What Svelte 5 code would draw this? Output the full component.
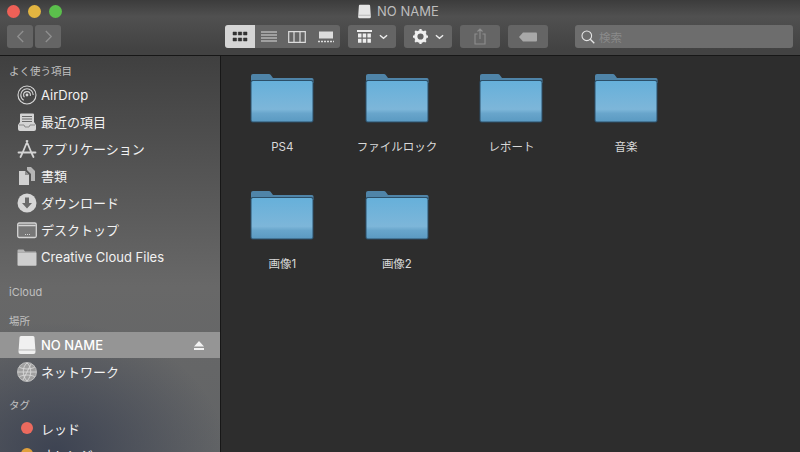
<script>
  const favs = [
    { k: 'airdrop', t: 'AirDrop' },
    { k: 'recent', t: '最近の項目' },
    { k: 'apps', t: 'アプリケーション' },
    { k: 'docs', t: '書類' },
    { k: 'down', t: 'ダウンロード' },
    { k: 'desk', t: 'デスクトップ' },
    { k: 'folder', t: 'Creative Cloud Files' }
  ];
  const files = ['PS4', 'ファイルロック', 'レポート', '音楽', '画像1', '画像2'];
</script>

{#snippet icon(k)}
  <svg class="ic" viewBox="0 0 20 20" width="20" height="20">
    {#if k === 'airdrop'}
      <g fill="none" stroke="#d8d8d8">
        <circle cx="10" cy="10" r="9" stroke-width="1.1" />
        <circle cx="10" cy="10" r="6.2" stroke-width="1.1" stroke-dasharray="26 13" stroke-dashoffset="-13" />
        <circle cx="10" cy="10" r="3.4" stroke-width="1.1" stroke-dasharray="15 7" stroke-dashoffset="-8" />
      </g>
      <circle cx="10" cy="10" r="1.4" fill="#d8d8d8" />
    {:else if k === 'recent'}
      <path d="M4 1.500h12a1 1 0 0 1 1 1V10l2 3v4a2 2 0 0 1-2 2H3a2 2 0 0 1-2-2v-4l2-3V2.500a1 1 0 0 1 1-1z" fill="#d4d4d4" />
      <path d="M5 4.500h10M5 7h10M5 9.500h10" stroke="#6a6a6a" stroke-width="1" />
      <path d="M2 13h5l1 2h4l1-2h5" fill="none" stroke="#8a8a8a" stroke-width="1" />
    {:else if k === 'apps'}
      <path d="M10.500 2 5 15M9.500 2 15 15M1.500 13.500h17M3.500 18l1.500-3M16.500 18 15 15" fill="none" stroke="#d4d4d4" stroke-width="1.800" stroke-linecap="round" />
    {:else if k === 'docs'}
      <path d="M2 5h6l4 4v10H2z" fill="#d0d0d0" />
      <path d="M10 1h4l4 4v10h-4V8l-4-4z" fill="#b5b5b5" />
      <path d="M8 5v4h4" fill="#8c8c8c" />
    {:else if k === 'down'}
      <circle cx="10" cy="10" r="9.500" fill="#d6d6d6" />
      <path d="M8 4.500h4V10h3l-5 5.500L5 10h3z" fill="#6a6a6a" />
    {:else if k === 'desk'}
      <rect x="0.700" y="3" width="18.600" height="14.500" rx="1.500" fill="#777" stroke="#d4d4d4" stroke-width="1.300" />
      <path d="M1.300 5.500h17.400" stroke="#d4d4d4" stroke-width="1.500" />
      <path d="M8 14.500h1M10 14.500h1M12 14.500h1" stroke="#d4d4d4" stroke-width="1.200" />
    {:else if k === 'folder'}
      <path d="M0.500 3.500a1 1 0 0 1 1-1h5l1.500 2h11v1H0.500z" fill="#b5b5b5" />
      <path d="M0.500 5.500h19V18a.8.8 0 0 1-.8.8H1.300a.8.8 0 0 1-.8-.8z" fill="#cecece" />
    {:else if k === 'drive'}
      <path d="M4 1h12a1.500 1.500 0 0 1 1.500 1.500L18.500 17a2 2 0 0 1-2 2h-13a2 2 0 0 1-2-2L2.500 2.500A1.500 1.500 0 0 1 4 1z" fill="#f0f0f0" />
      <path d="M1.800 15h16.400" stroke="#b5b5b5" stroke-width="1" />
    {:else if k === 'net'}
      <circle cx="10" cy="10" r="9.500" fill="#a0a0a0" stroke="#cfcfcf" stroke-width="0.800" />
      <g fill="none" stroke="#dedede" stroke-width="0.800">
        <path d="M10 1c-5 4-5 13 0 18M10 1c5 4 5 13 0 18M1 10h18M2.500 5.500c5 2 10 2 15 0M2.500 14.500c5-2 10-2 15 0M14 2 6 18" />
      </g>
    {/if}
  </svg>
{/snippet}

{#snippet folderArt()}
  <svg class="folder" viewBox="0 0 64 50" width="64" height="50">
    <defs>
      <linearGradient id="fbody" x1="0" y1="0" x2="0" y2="1">
        <stop offset="0" stop-color="#66b0da" />
        <stop offset="0.7" stop-color="#7db6d9" />
        <stop offset="0.8" stop-color="#68a5cb" />
        <stop offset="1" stop-color="#5b9ac2" />
      </linearGradient>
    </defs>
    <path d="M1 3a2 2 0 0 1 2-2h16a2 2 0 0 1 1.600.8L23 5h39a1.500 1.500 0 0 1 1.500 1.500V10H1z" fill="#4f84a8" />
    <rect x="0.500" y="7" width="63" height="42.500" rx="2" fill="#2c4f68" />
    <rect x="1.500" y="8" width="61" height="40.500" rx="1.500" fill="url(#fbody)" />
  </svg>
{/snippet}

<div class="win">
  <header class="top">
    <div class="titlerow">
      <div class="lights">
        <i class="red"></i><i class="yel"></i><i class="grn"></i>
      </div>
      <div class="title">
        <svg viewBox="0 0 20 20" width="15" height="15"><path d="M4 1h12a1.500 1.500 0 0 1 1.500 1.500L18.500 17a2 2 0 0 1-2 2h-13a2 2 0 0 1-2-2L2.500 2.500A1.500 1.500 0 0 1 4 1z" fill="#e6e6e6" /><path d="M1.800 15h16.400" stroke="#aaa" /></svg>
        <span>NO NAME</span>
      </div>
    </div>
    <div class="tools">
      <div class="nav">
        <button class="btn b26" aria-label="戻る"><svg viewBox="0 0 10 14" width="9" height="13"><path d="M8 1 2 7l6 6" fill="none" stroke="#8f8f8f" stroke-width="1.500" /></svg></button>
        <button class="btn b26" aria-label="進む"><svg viewBox="0 0 10 14" width="9" height="13"><path d="m2 1 6 6-6 6" fill="none" stroke="#8f8f8f" stroke-width="1.500" /></svg></button>
      </div>
      <div class="views">
        <button class="seg on" aria-label="アイコン"><svg viewBox="0 0 16 12" width="16" height="12"><path d="M1 1h3.500v3H1zM6.250 1h3.500v3h-3.500zM11.500 1H15v3h-3.500zM1 7h3.500v3H1zM6.250 7h3.500v3h-3.500zM11.500 7H15v3h-3.500z" fill="#333" stroke="#333" stroke-width=".5" /></svg></button>
        <button class="seg" aria-label="リスト"><svg viewBox="0 0 16 12" width="16" height="12"><path d="M0 1h16M0 4h16M0 7h16M0 10h16" stroke="#dcdcdc" /></svg></button>
        <button class="seg" aria-label="カラム"><svg viewBox="0 0 18 12" width="18" height="12"><path d="M.7.7h16.600v10.600H.7zM6 1v10M12 1v10" fill="none" stroke="#dcdcdc" stroke-width="1.200" /></svg></button>
        <button class="seg" aria-label="ギャラリー"><svg viewBox="0 0 16 12" width="16" height="12"><path d="M1 .5h14v7H1z" fill="#dcdcdc" /><path d="M0 10.500h16" stroke="#dcdcdc" stroke-dasharray="2 1" stroke-width="1.500" /></svg></button>
      </div>
      <button class="btn group" aria-label="グループ">
        <svg viewBox="0 0 15 13" width="15" height="13"><path d="M0 .5h15M0 1.500h15" stroke="#eee" /><path d="M1 3.500h3.500v4H1zM5.700 3.500h3.500v4H5.700zM10.400 3.500h3.500v4h-3.500zM1 8.700h3.500v4H1zM5.700 8.700h3.500v4H5.700zM10.400 8.700h3.500v4h-3.500z" fill="#eee" /></svg>
        <svg viewBox="0 0 10 6" width="9" height="6"><path d="m1 1 4 3.500L9 1" fill="none" stroke="#eee" stroke-width="1.500" /></svg>
      </button>
      <button class="btn action" aria-label="アクション">
        <svg viewBox="0 0 16 16" width="15" height="15"><circle cx="8" cy="8" r="5" fill="none" stroke="#f0f0f0" stroke-width="3.400" /><path d="M8 0v16M0 8h16M2.300 2.300l11.400 11.400M13.700 2.300 2.300 13.700" stroke="#f0f0f0" stroke-width="2.400" stroke-dasharray="3 10 3 0" /></svg>
        <svg viewBox="0 0 10 6" width="9" height="6"><path d="m1 1 4 3.500L9 1" fill="none" stroke="#eee" stroke-width="1.500" /></svg>
      </button>
      <button class="btn b40" aria-label="共有"><svg viewBox="0 0 12 17" width="12" height="17"><path d="M3.500 6H1v10h10V6H8.500M6 11V1M3.500 3.500 6 1l2.500 2.500" fill="none" stroke="#8e8e8e" stroke-width="1.100" /></svg></button>
      <button class="btn b40 tagb" aria-label="タグ"><svg viewBox="0 0 18 10" width="18" height="10"><path d="M4 .5h13a1 1 0 0 1 1 1v7a1 1 0 0 1-1 1H4L0 5z" fill="#a8a8a8" /></svg></button>
      <div class="search">
        <svg viewBox="0 0 14 14" width="14" height="14"><circle cx="5.800" cy="5.800" r="4.800" fill="none" stroke="#e6e6e6" stroke-width="1.100" /><path d="m9.300 9.300 4 4" stroke="#e6e6e6" stroke-width="1.300" /></svg>
        <span>検索</span>
      </div>
    </div>
  </header>

  <div class="body">
    <aside class="side">
      <div class="head first">よく使う項目</div>
      {#each favs as f}
        <div class="row">{@render icon(f.k)}<span>{f.t}</span></div>
      {/each}
      <div class="head icloud">iCloud</div>
      <div class="head place">場所</div>
      <div class="row sel">{@render icon('drive')}<span>NO NAME</span>
        <svg class="eject" viewBox="0 0 10 9" width="10" height="9"><path d="M5 0l5 5.500H0z M0 7h10v2H0z" fill="#f2f2f2" /></svg>
      </div>
      <div class="row">{@render icon('net')}<span>ネットワーク</span></div>
      <div class="head tag">タグ</div>
      <div class="row tagrow">
        <i class="dot" style="background:#ec6a5e"></i><span>レッド</span>
      </div>
      <div class="row tagrow next">
        <i class="dot" style="background:#e0a03c"></i><span>オレンジ</span>
      </div>
    </aside>
    <main class="grid">
      {#each files as f}
        <div class="item">
          {@render folderArt()}
          <div class="name">{f}</div>
        </div>
      {/each}
    </main>
  </div>
</div>

<style>
  :global(body) { margin: 0; background: #2d2d2d; }
  .win {
    width: 800px; height: 452px; overflow: hidden; display: flex; flex-direction: column;
    font-family: Inter, "Noto Sans CJK JP", sans-serif; color: #eee;
  }
  .top {
    height: 56px; flex: none; box-sizing: border-box;
    background: linear-gradient(#3c3c3c, #505050 30%, #424242 92%);
    border-bottom: 1px solid #171717;
    display: flex; flex-direction: column;
  }
  .titlerow { height: 23px; flex: none; display: flex; align-items: center; position: relative; }
  .lights { display: flex; gap: 8px; padding-left: 7px; }
  .lights i { width: 13px; height: 13px; border-radius: 50%; display: block; }
  .red { background: #ee6057; } .yel { background: #e3b541; } .grn { background: #5bbf4c; }
  .title {
    position: absolute; left: 357px; top: 3px; display: flex; align-items: center; gap: 5px;
    font-size: 13px; color: #bdbdbd;
  }
  .tools { display: flex; align-items: flex-start; padding: 2px 0 0 7px; }
  button { border: 0; padding: 0; margin: 0; font: inherit; }
  .btn {
    height: 23px; background: #656565; border-radius: 3px; display: flex; align-items: center; justify-content: center;
  }
  .nav { display: flex; gap: 2px; margin-right: 164px; }
  .b26 { width: 26px; }
  .views { display: flex; height: 23px; border-radius: 3px; overflow: hidden; background: #656565; margin-right: 8px; width: 115px; }
  .seg { background: transparent; flex: 1; display: flex; align-items: center; justify-content: center; }
  .seg.on { background: #d5d5d5; flex: none; width: 30px; }
  .group { width: 48px; gap: 7px; margin-right: 8px; }
  .action { width: 48px; gap: 7px; margin-right: 8px; }
  .b40 { width: 40px; margin-right: 8px; }
  .tagb { margin-right: 27px; }
  .search {
    width: 218px; height: 23px; box-sizing: border-box; border-radius: 3px; background: #6d6d6d;
    display: flex; align-items: center; gap: 4px; padding-left: 6px; font-size: 11.500px; color: #8a8a8a;
  }
  .body { flex: 1; display: flex; min-height: 0; }
  .side {
    width: 221px; flex: none; box-sizing: border-box; padding-top: 8px; overflow: hidden;
    border-right: 1px solid #171717;
    background:
      radial-gradient(ellipse 170px 130px at 25% 100%, #3d4352, rgba(70, 76, 92, 0) 100%),
      linear-gradient(#404040, #686868 58%, #626466 100%);
  }
  .head { font-size: 10.500px; color: #c0c0c0; height: 16px; line-height: 16px; padding-left: 9px; }
  .icloud { margin-top: 14px; font-size: 11px; }
  .place { margin-top: 14px; }
  .tag { margin-top: 13px; }
  .first { margin-bottom: 1px; }
  .row {
    height: 27px; display: flex; align-items: center; gap: 4px; padding-left: 17px;
    font-size: 13px; color: #f2f2f2; box-sizing: border-box; position: relative;
  }
  .ic { flex: none; }
  .sel { background: #959595; height: 26px; margin-top: 2px; color: #fff; }
  .sel span { font-weight: 500; }
  .eject { position: absolute; left: 194px; top: 9px; }
  .tagrow { padding-left: 21px; gap: 8px; margin-top: 1px; height: 26px; }
  .tagrow.next { margin-top: 0; }
  .dot { width: 12px; height: 12px; border-radius: 50%; display: block; flex: none; }
  .grid {
    flex: 1; background: #2d2d2d; display: grid; grid-template-columns: repeat(4, 114.600px);
    grid-auto-rows: 116.500px; padding: 17px 0 0 4px; align-content: start;
  }
  .item { display: flex; flex-direction: column; align-items: center; }
  .folder { display: block; margin-bottom: 16px; }
  .name { font-size: 11.500px; color: #d9d9d9; line-height: 16px; white-space: nowrap; }
</style>
